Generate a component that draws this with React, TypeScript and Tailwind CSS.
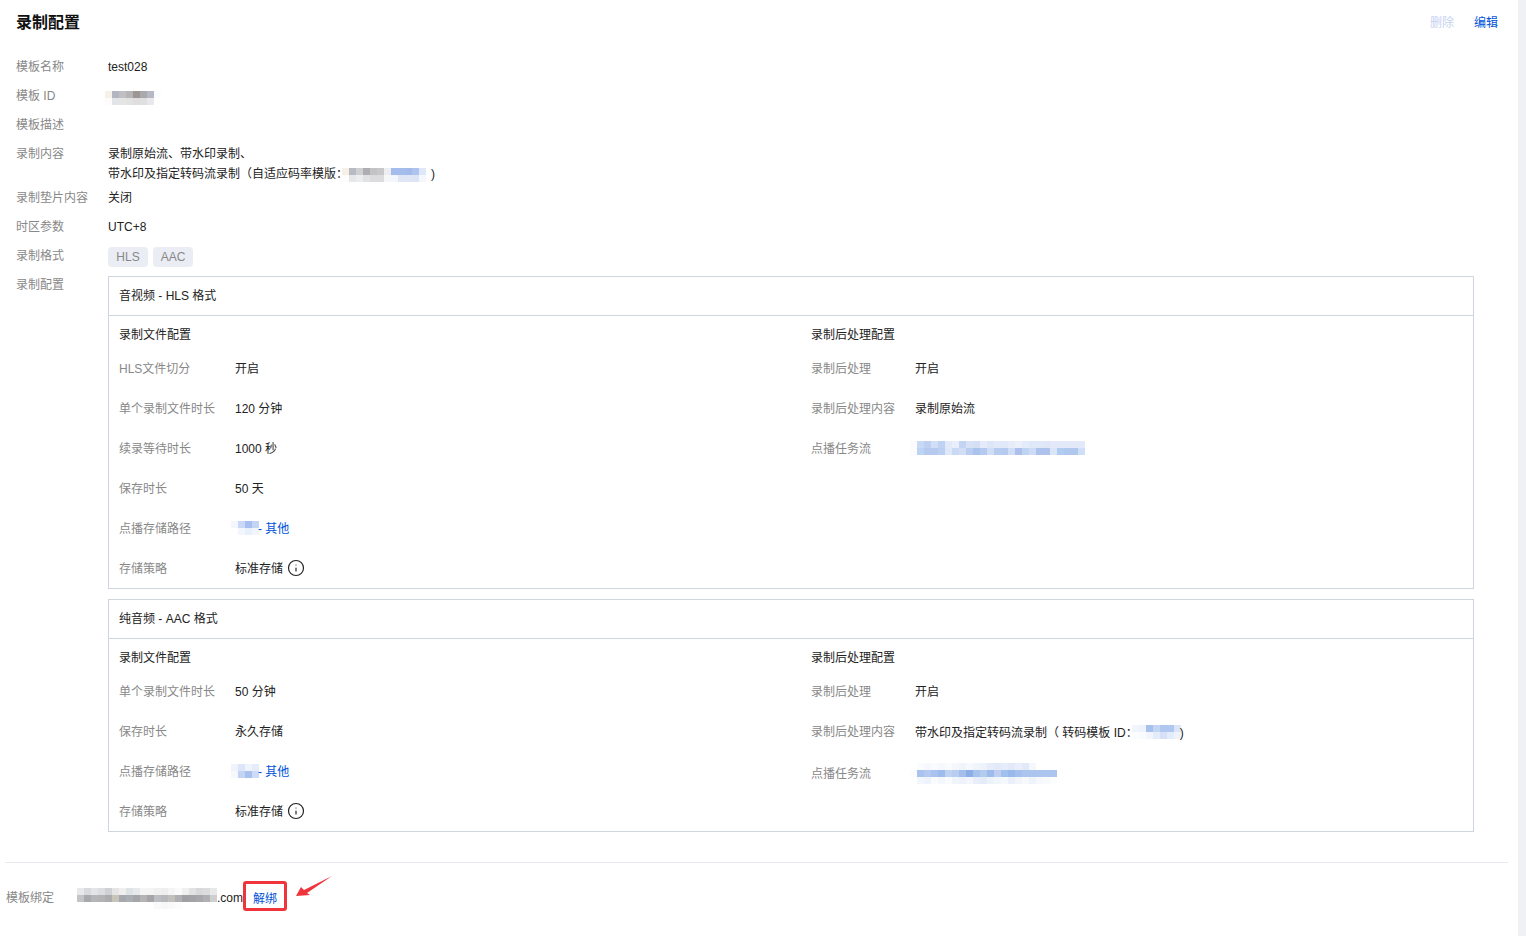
import { Info } from 'lucide-react'
import type { ReactNode } from 'react'

const mosaicIds: string[][] = [
  ['#f6f1e9', '#b3b6c0', '#bfbfc4', '#b6b4b4', '#9d9695', '#aba9ab', '#b6b9c3', '#fbfcfe'],
  ['#fdfcfb', '#e3e4e7', '#e5e5e6', '#e3e2e2', '#dfdddd', '#e1e0e1', '#e9e9ed', '#ffffff'],
]

const mosaicAdaptive: string[][] = [
  ['#f6f0e7', '#b8bbc3', '#cfd0d3', '#aeaeb2', '#c3c3c5', '#c8c8ca', '#eceef2', '#a5bdec', '#a5bdec', '#a3bbea', '#aec4ee', '#dfe8f8'],
  ['#fefdfb', '#e6e7e9', '#ecedee', '#e2e2e3', '#dcdcde', '#dcdcde', '#f6f7f8', '#f3f6fc', '#dfe7f7', '#dfe7f7', '#dce5f6', '#f4f7fd'],
]

const mosaicTask1: string[][] = [
  ['#fafaff', '#c8d9f5', '#bdd0f1', '#d0def6', '#c0d2f2', '#e2e9f9', '#e8eefa', '#c3d5f4', '#d8e2f7', '#d4dff6', '#e5ebfa', '#dde6f8', '#e2e9f9', '#e0e8f9', '#e6ecfa', '#ecf0fb', '#e4ebfa', '#dfe8f9', '#dfe8f9', '#e0e6f8', '#e4e9f9', '#e4e9f9', '#e4e9f9', '#e4e9f9', '#e4e9f9'],
  ['#fcfcff', '#bed4f4', '#b5caee', '#b5caee', '#bcd0f1', '#dfe8f9', '#cad9f4', '#d1def6', '#bacdf0', '#a9c3ed', '#b5caee', '#d0ddf6', '#b8ccf0', '#b5caee', '#d0ddf6', '#adc0eb', '#bdd4f3', '#cddcf6', '#adc2ec', '#adc2ec', '#dbe5f8', '#b0cdf1', '#b0c8ee', '#b0c8ee', '#cfdff7'],
]

const mosaicTask2: string[][] = [
  ['#ffffff', '#fafbfe', '#f6f8fd', '#fafbfe', '#f6f8fd', '#fafbfe', '#f4f7fc', '#f0f4fb', '#f6f8fd', '#f0f4fb', '#eef2fb', '#e6ecfa', '#e2e9f9', '#e6ecfa', '#e2e9f9', '#e9eefa', '#e2e9f9', '#f4f7fc', '#ffffff', '#ffffff', '#ffffff'],
  ['#fcfcff', '#a9c2ee', '#b3c9ef', '#a9c2ee', '#9dbcec', '#c0d2f2', '#b9cdf1', '#a5bfed', '#8aaee8', '#a8c2ee', '#b5caef', '#9bbcec', '#c0cdf0', '#a0c0ee', '#9ab9eb', '#a5c0ed', '#acc5ee', '#acc5ee', '#acc5ee', '#acc5ee', '#acc5ee'],
  ['#ffffff', '#f3f6fc', '#eff3fb', '#fafbfe', '#f4f7fc', '#fafbfe', '#f0f4fb', '#eef2fb', '#f3f6fc', '#e8eefa', '#e4ebf9', '#eef2fb', '#f1f5fc', '#f5f8fd', '#ebf0fa', '#f2f5fc', '#f7f9fd', '#eff3fb', '#f5f8fd', '#f9fafe', '#fcfdff'],
]

const mosaicTemplate: string[][] = [
  ['#f1f5fc', '#eef3fb', '#a7c1ee', '#c4d5f4', '#b0c7ef', '#b0c7ef', '#dbe5f8'],
  ['#fcfdff', '#f9fbfe', '#f2f5fc', '#e5ecf9', '#d6e1f7', '#e4ebf9', '#eef2fb'],
]

const mosaicPath1: string[][] = [
  ['#f3f6fd', '#c9d8f5', '#a6bff0', '#c4d4f4'],
  ['#ffffff', '#f3f6fd', '#eaf0fb', '#f1f5fc'],
]

const mosaicPath2: string[][] = [
  ['#eef3fc', '#dde6f8', '#eef3fc', '#e6ecfa'],
  ['#f6f8fe', '#c3d4f3', '#a9c1ef', '#cddcf6'],
]

const mosaicDomain: string[][] = [
  ['#e8e8ea', '#d9dade', '#e4e4e6', '#dcdde0', '#d0d1d4', '#e5e5e5', '#f0efee', '#dee3e8', '#e8e9eb', '#f5f5f6', '#f4f4f4', '#f0f0f1', '#eeeeef', '#f5f5f6', '#fafafa', '#f0f0f1', '#e2e2e3', '#d9d9db', '#dcdcdd', '#e8e8e9'],
  ['#c4c4c7', '#a8a9ad', '#b5b6b8', '#b3b3b5', '#acacad', '#c8c4ba', '#a5a8af', '#acaeb3', '#a5a6aa', '#b5b3b4', '#a6a4a8', '#bdbec2', '#b7b8bc', '#c2c0bb', '#b0afb2', '#9f9fa4', '#a3a3a7', '#a8a8ac', '#b0b0b4', '#cfcfd1'],
  ['#ffffff', '#ffffff', '#ffffff', '#ffffff', '#ffffff', '#ffffff', '#ffffff', '#ffffff', '#ffffff', '#ffffff', '#ffffff', '#fafafa', '#f7f7f7', '#f9f9f9', '#fcfcfc', '#ffffff', '#ffffff', '#ffffff', '#ffffff', '#ffffff'],
]

function Mosaic({ rows, className }: { rows: string[][]; className?: string }) {
  const cols = rows[0].length
  return (
    <svg width={cols * 7} height={rows.length * 7} shapeRendering="crispEdges" className={`block shrink-0 ${className ?? ''}`}>
      {rows.map((row, y) =>
        row.map((fill, x) => <rect key={`${x}-${y}`} x={x * 7} y={y * 7} width="7" height="7" fill={fill} />),
      )}
    </svg>
  )
}

function InfoRow({ label, children, className }: { label: string; children?: ReactNode; className?: string }) {
  return (
    <div className={`flex leading-5 ${className ?? 'mb-[9px]'}`}>
      <div className="w-[92px] shrink-0 text-[#888]">{label}</div>
      <div className="min-w-0 flex-1">{children}</div>
    </div>
  )
}

function SubRow({ label, width, className, children }: { label: string; width: string; className?: string; children?: ReactNode }) {
  return (
    <div className={`flex h-10 items-center ${className ?? 'pt-[2px]'}`}>
      <div className={`shrink-0 text-[#888] ${width}`}>{label}</div>
      <div className="flex items-center">{children}</div>
    </div>
  )
}

function Column({ title, children }: { title: string; children: ReactNode }) {
  return (
    <div className="pl-[10px]">
      <div className="mb-1 h-5 pt-[1px] leading-5">{title}</div>
      {children}
    </div>
  )
}

function Card({ title, className, children }: { title: string; className?: string; children: ReactNode }) {
  return (
    <div className={`border border-[#cfd5de] ${className ?? ''}`}>
      <div className="flex h-[39px] items-center border-b border-[#cfd5de] pl-[10px]">{title}</div>
      <div className="grid grid-cols-[692px_1fr] pt-2">{children}</div>
    </div>
  )
}

function Storage() {
  return (
    <>
      标准存储
      <Info size={18} strokeWidth={1.6} className="ml-[4px] -mt-[2px] text-[#222]" />
    </>
  )
}

const leftLabel = 'w-[116px]'
const rightLabel = 'w-[104px]'

export default function App() {
  return (
    <div
      className="flex h-[936px] w-[1526px] overflow-hidden bg-white text-xs text-[#222]"
      style={{ fontFamily: '"Liberation Sans", "Noto Sans CJK SC", sans-serif' }}
    >
      <div className="min-w-0 flex-1 pl-[5px] pr-[10px]">
        <div className="ml-[11px]">
          <div className="flex h-11 items-center justify-between pt-[2px] pr-[10px]">
            <h2 className="text-base font-bold text-[#111]">录制配置</h2>
            <div className="flex gap-5">
              <span className="text-[#c6d2f0]">删除</span>
              <span className="text-[#0052d9]">编辑</span>
            </div>
          </div>

          <div className="pt-[13px] pr-[34px]">
            <InfoRow label="模板名称">test028</InfoRow>
            <InfoRow label="模板 ID">
              <Mosaic rows={mosaicIds} className="-ml-[3px] mt-[5px]" />
            </InfoRow>
            <InfoRow label="模板描述" />
            <InfoRow label="录制内容" className="mb-1">
              <div>录制原始流、带水印录制、</div>
              <div className="flex items-center">
                带水印及指定转码流录制（自适应码率模版：
                <Mosaic rows={mosaicAdaptive} className="-ml-[6px] mt-[2px]" />
                <span className="ml-[5px]">)</span>
              </div>
            </InfoRow>
            <InfoRow label="录制垫片内容">关闭</InfoRow>
            <InfoRow label="时区参数">UTC+8</InfoRow>
            <InfoRow label="录制格式" className="mb-2">
              <div className="mt-[1px] flex gap-[5px]">
                <span className="flex h-5 w-10 items-center justify-center rounded-sm bg-[#eaedf3] text-[#888]">HLS</span>
                <span className="flex h-5 w-10 items-center justify-center rounded-sm bg-[#eaedf3] text-[#888]">AAC</span>
              </div>
            </InfoRow>
            <InfoRow label="录制配置" className="">
              <div className="pt-[1px]">
                <Card title="音视频 - HLS 格式">
                  <Column title="录制文件配置">
                    <SubRow label="HLS文件切分" width={leftLabel}>开启</SubRow>
                    <SubRow label="单个录制文件时长" width={leftLabel}>120 分钟</SubRow>
                    <SubRow label="续录等待时长" width={leftLabel}>1000 秒</SubRow>
                    <SubRow label="保存时长" width={leftLabel}>50 天</SubRow>
                    <SubRow label="点播存储路径" width={leftLabel}>
                      <Mosaic rows={mosaicPath1} className="-ml-[4px] -mt-[2px]" />
                      <span className="-ml-[1px] text-[#0052d9]">- 其他</span>
                    </SubRow>
                    <SubRow label="存储策略" width={leftLabel}><Storage /></SubRow>
                  </Column>
                  <Column title="录制后处理配置">
                    <SubRow label="录制后处理" width={rightLabel}>开启</SubRow>
                    <SubRow label="录制后处理内容" width={rightLabel}>录制原始流</SubRow>
                    <SubRow label="点播任务流" width={rightLabel}>
                      <Mosaic rows={mosaicTask1} className="-ml-[5px] -mt-[2px]" />
                    </SubRow>
                  </Column>
                </Card>
                <Card title="纯音频 - AAC 格式" className="mt-[10px]">
                  <Column title="录制文件配置">
                    <SubRow label="单个录制文件时长" width={leftLabel}>50 分钟</SubRow>
                    <SubRow label="保存时长" width={leftLabel}>永久存储</SubRow>
                    <SubRow label="点播存储路径" width={leftLabel}>
                      <Mosaic rows={mosaicPath2} className="-ml-[4px] -mt-[2px]" />
                      <span className="-ml-[1px] text-[#0052d9]">- 其他</span>
                    </SubRow>
                    <SubRow label="存储策略" width={leftLabel}><Storage /></SubRow>
                  </Column>
                  <Column title="录制后处理配置">
                    <SubRow label="录制后处理" width={rightLabel}>开启</SubRow>
                    <SubRow label="录制后处理内容" width={rightLabel}>
                      <span className="mt-[2px]">带水印及指定转码流录制（ 转码模板 ID：</span>
                      <Mosaic rows={mosaicTemplate} className="-ml-[6px]" />
                      <span className="-ml-[1px] mt-[2px]">)</span>
                    </SubRow>
                    <SubRow label="点播任务流" width={rightLabel} className="pt-[6px]">
                      <Mosaic rows={mosaicTask2} className="-ml-[5px] -mt-[1px]" />
                    </SubRow>
                  </Column>
                </Card>
              </div>
            </InfoRow>
          </div>
        </div>

        <div className="mt-[30px] border-t border-[#e8eaf0] pt-[18px]">
          <div className="flex h-[30px] items-center pl-[1px]">
            <span className="mt-[4px] w-[71px] shrink-0 text-[#888]">模板绑定</span>
            <Mosaic rows={mosaicDomain} className="mt-[5px]" />
            <span className="mt-[3px]">.com</span>
            <span className="flex h-[30px] w-11 items-center justify-center rounded-[3px] border-[3px] border-[#f0343c] pt-[5px] text-[#0052d9]">
              解绑
            </span>
            <svg width="38" height="22" viewBox="0 0 38 22" className="ml-[8px] mt-[-20px] shrink-0">
              <polygon points="1,21 6,12 9,15 37,1 12,18 15,20" fill="#f0343c" />
            </svg>
          </div>
        </div>
      </div>
      <div className="w-2 shrink-0 bg-[#f0f1f5]" />
    </div>
  )
}
